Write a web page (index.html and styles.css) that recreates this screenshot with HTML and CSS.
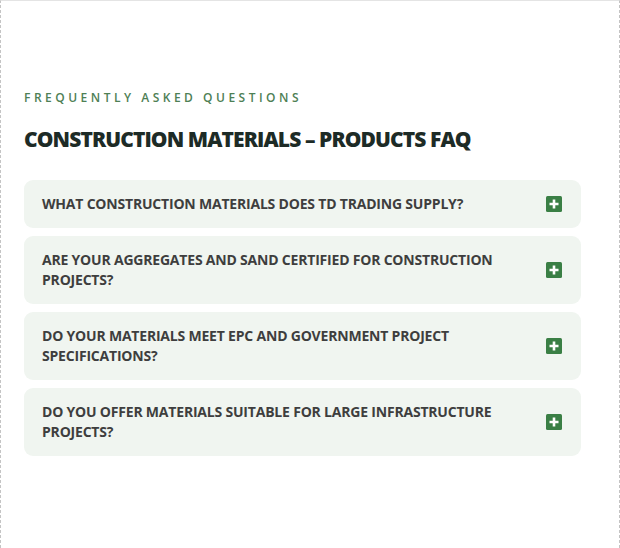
FILE: index.html
```
<!DOCTYPE html>
<html lang="en">
<head>
<meta charset="utf-8">
<title>FAQ</title>
<link rel="stylesheet" href="styles.css">
</head>
<body>
<section class="faq">
  <p class="eyebrow">FREQUENTLY ASKED QUESTIONS</p>
  <h2 class="title">CONSTRUCTION MATERIALS – PRODUCTS FAQ</h2>
  <div class="list">
    <div class="item">
      <span class="q">WHAT CONSTRUCTION MATERIALS DOES TD TRADING SUPPLY?</span>
      <span class="icon"><svg width="16" height="16" viewBox="0 0 16 16"><rect width="16" height="16" rx="1.5" fill="#3a7f45"/><path d="M8 3.5v9M3.5 8h9" stroke="#fff" stroke-width="2.6"/></svg></span>
    </div>
    <div class="item">
      <span class="q">ARE YOUR AGGREGATES AND SAND CERTIFIED FOR CONSTRUCTION PROJECTS?</span>
      <span class="icon"><svg width="16" height="16" viewBox="0 0 16 16"><rect width="16" height="16" rx="1.5" fill="#3a7f45"/><path d="M8 3.5v9M3.5 8h9" stroke="#fff" stroke-width="2.6"/></svg></span>
    </div>
    <div class="item">
      <span class="q">DO YOUR MATERIALS MEET EPC AND GOVERNMENT PROJECT SPECIFICATIONS?</span>
      <span class="icon"><svg width="16" height="16" viewBox="0 0 16 16"><rect width="16" height="16" rx="1.5" fill="#3a7f45"/><path d="M8 3.5v9M3.5 8h9" stroke="#fff" stroke-width="2.6"/></svg></span>
    </div>
    <div class="item">
      <span class="q">DO YOU OFFER MATERIALS SUITABLE FOR LARGE INFRASTRUCTURE PROJECTS?</span>
      <span class="icon"><svg width="16" height="16" viewBox="0 0 16 16"><rect width="16" height="16" rx="1.5" fill="#3a7f45"/><path d="M8 3.5v9M3.5 8h9" stroke="#fff" stroke-width="2.6"/></svg></span>
    </div>
  </div>
</section>
</body>
</html>
```
FILE: styles.css
```
html, body {
  margin: 0;
  padding: 0;
  height: 100%;
}
body {
  box-sizing: border-box;
  background: #fff;
  border-top: 1px solid #e4e4e4;
  border-left: 1px dashed #c4c4c4;
  border-right: 1px dashed #c4c4c4;
  font-family: "Open Sans", "Liberation Sans", sans-serif;
}
.faq {
  padding: 89px 38px 0 23px;
}
.eyebrow {
  margin: 0;
  font-size: 12px;
  font-weight: 600;
  letter-spacing: 3.5px;
  color: #4e8055;
  line-height: 16px;
}
.title {
  margin: 18px 0 0;
  font-size: 21px;
  font-weight: 800;
  letter-spacing: -0.9px;
  line-height: 30px;
  color: #1d2b26;
}
.list {
  margin-top: 26px;
  display: flex;
  flex-direction: column;
  gap: 8px;
}
.item {
  display: flex;
  align-items: center;
  gap: 24px;
  padding: 14px 19px 14px 18px;
  background: #f0f5f0;
  border-radius: 9px;
}
.q {
  flex: 1;
  font-size: 14px;
  font-weight: 700;
  line-height: 20px;
  letter-spacing: -0.2px;
  color: #3e3e3e;
}
.icon {
  display: flex;
  width: 16px;
  height: 16px;
}
```
